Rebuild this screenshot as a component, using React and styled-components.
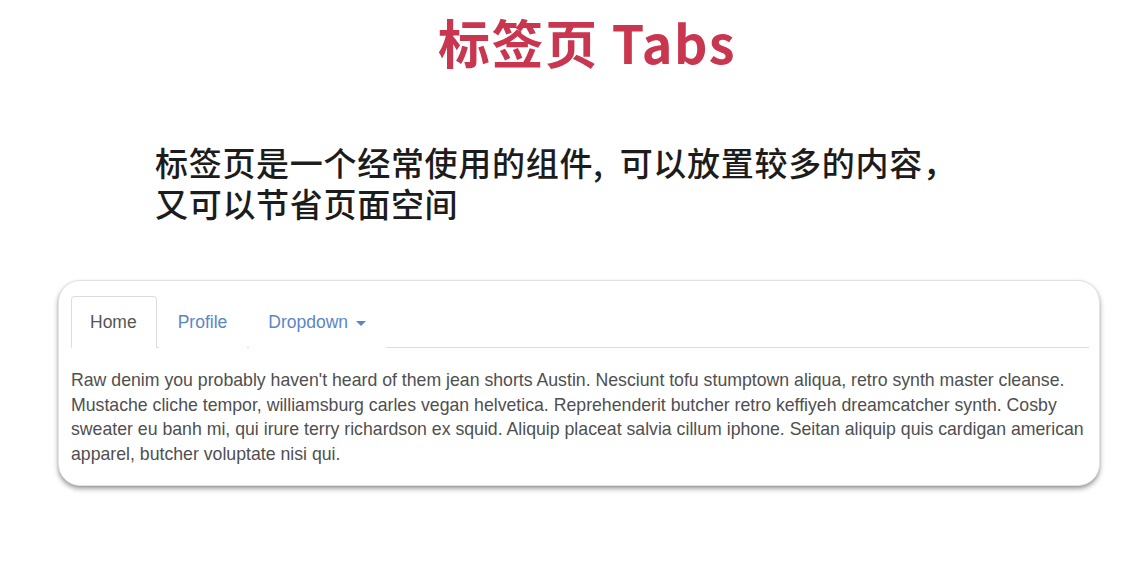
import React, { useState } from "react";
import styled, { createGlobalStyle } from "styled-components";

const Global = createGlobalStyle`
  html, body { margin: 0; padding: 0; background: #ffffff; }
  body { font-family: "Liberation Sans", Arial, sans-serif; }
  * { box-sizing: border-box; }
`;

const Page = styled.div`
  width: 1144px;
  height: 574px;
  overflow: hidden;
  padding-top: 9px;
`;

const Title = styled.h1`
  margin: 0;
  text-align: center;
  font-family: "Noto Sans CJK SC", "Liberation Sans", sans-serif;
  font-weight: 700;
  font-size: 52px;
  line-height: 66px;
  letter-spacing: 1.5px;
  color: #c8374f;
  padding-left: 30px;
`;

const Lead = styled.p`
  margin: 67px 0 0 155px;
  font-family: "Noto Sans CJK SC", "Liberation Sans", sans-serif;
  font-weight: 500;
  font-size: 33px;
  line-height: 41px;
  color: #1c1c1c;
  letter-spacing: 0.7px;
`;

const Gap = styled.span`
  display: inline-block;
  width: 16px;
`;

const Card = styled.div`
  margin: 56px 0 0 58px;
  width: 1042px;
  border: 1px solid #e2e2e2;
  border-radius: 22px;
  box-shadow: 0 3px 5px rgba(0, 0, 0, 0.35), 0 1px 2px rgba(0, 0, 0, 0.12);
  padding: 15px 10px 19px 12px;
  background: #fff;
`;

const TabBar = styled.ul`
  list-style: none;
  margin: 0;
  padding: 0;
  display: flex;
  border-bottom: 1px solid #dddddd;
`;

const TabItem = styled.li`
  margin-right: 2px;
  margin-bottom: -1px;
`;

const TabLink = styled.a`
  display: flex;
  align-items: center;
  gap: 8px;
  padding: 14px 19px 14px 18px;
  font-size: 17.5px;
  line-height: 22px;
  text-decoration: none;
  cursor: pointer;
  border: 1px solid ${(p) => (p.$active ? "#dddddd" : "transparent")};
  border-bottom-color: ${(p) => (p.$active ? "#ffffff" : "transparent")};
  border-radius: 4px 4px 0 0;
  background: #fff;
  color: ${(p) => (p.$active ? "#555555" : "#5b86c4")};
`;

const Caret = styled.span`
  display: inline-block;
  width: 0;
  height: 0;
  border-left: 5px solid transparent;
  border-right: 5px solid transparent;
  border-top: 5px solid #5b86c4;
  margin-top: 2px;
`;

const Pane = styled.p`
  margin: 20px 0 0;
  font-size: 17.7px;
  line-height: 24.6px;
  color: #4f4f4f;
`;

export default function App() {
  const [tab, setTab] = useState("home");
  return (
    <Page>
      <Global />
      <Title>标签页 Tabs</Title>
      <Lead>
        标签页是一个经常使用的组件,<Gap />可以放置较多的内容，
        <br />
        又可以节省页面空间
      </Lead>
      <Card>
        <TabBar>
          <TabItem>
            <TabLink $active={tab === "home"} onClick={() => setTab("home")}>Home</TabLink>
          </TabItem>
          <TabItem>
            <TabLink $active={tab === "profile"} onClick={() => setTab("profile")}>Profile</TabLink>
          </TabItem>
          <TabItem>
            <TabLink $active={tab === "dropdown"} onClick={() => setTab("dropdown")}>
              Dropdown <Caret />
            </TabLink>
          </TabItem>
        </TabBar>
        <Pane>
          Raw denim you probably haven't heard of them jean shorts Austin. Nesciunt tofu stumptown aliqua, retro synth master cleanse. Mustache cliche tempor, williamsburg carles vegan helvetica. Reprehenderit butcher retro keffiyeh dreamcatcher synth. Cosby sweater eu banh mi, qui irure terry richardson ex squid. Aliquip placeat salvia cillum iphone. Seitan aliquip quis cardigan american apparel, butcher voluptate nisi qui.
        </Pane>
      </Card>
    </Page>
  );
}
